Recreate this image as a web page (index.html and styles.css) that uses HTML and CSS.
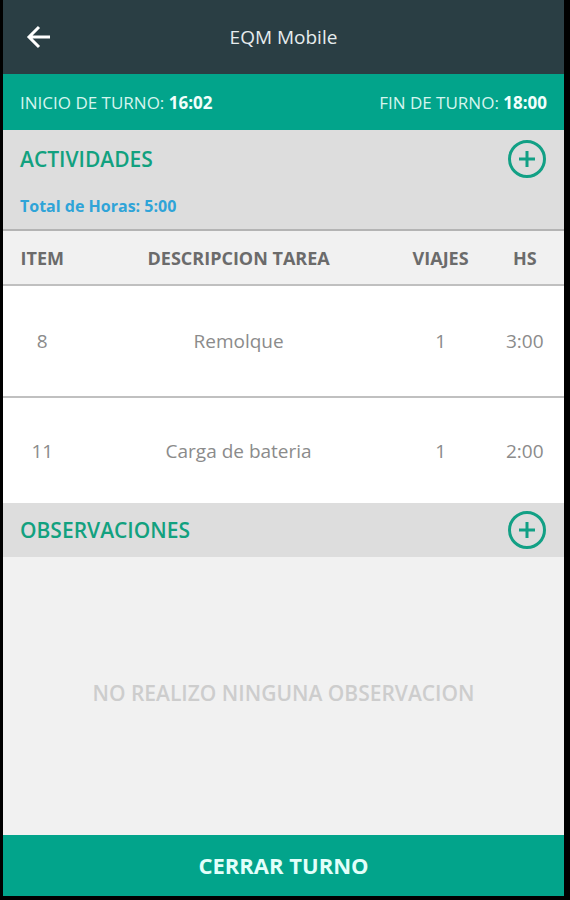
FILE: index.html
```html
<!DOCTYPE html>
<html lang="es">
<head>
<meta charset="utf-8">
<meta name="viewport" content="width=device-width, initial-scale=1">
<title>EQM Mobile</title>
<link rel="stylesheet" href="styles.css">
</head>
<body>
<div class="app">
  <header class="topbar">
    <button class="icon-button back" type="button" aria-label="Volver">
      <svg class="back-icon" viewBox="0 0 24 24" aria-hidden="true"><path d="M13 2 3 12l10 10M3 12H24"/></svg>
    </button>
    <h1 class="title">EQM Mobile</h1>
  </header>
  <div class="shift">
    <span>INICIO DE TURNO: <b>16:02</b></span>
    <span>FIN DE TURNO: <b>18:00</b></span>
  </div>
  <main class="content">
    <section class="activities">
      <div class="section-head">
        <h2 class="section-title">ACTIVIDADES</h2>
        <button class="icon-button" type="button" aria-label="Agregar actividad">
          <svg class="add-icon" viewBox="0 0 38 38" aria-hidden="true"><circle cx="19" cy="19" r="17.500"/><path d="M19 11v16M11 19h16"/></svg>
        </button>
      </div>
      <p class="total">Total de Horas: 5:00</p>
      <table class="tasks">
        <thead>
          <tr><th class="col-item">ITEM</th><th class="col-task">DESCRIPCION TAREA</th><th class="col-trips">VIAJES</th><th class="col-hours">HS</th></tr>
        </thead>
        <tbody>
          <tr><td>8</td><td>Remolque</td><td>1</td><td>3:00</td></tr>
          <tr><td>11</td><td>Carga de bateria</td><td>1</td><td>2:00</td></tr>
        </tbody>
      </table>
    </section>
    <section class="notes">
      <div class="section-head">
        <h2 class="section-title">OBSERVACIONES</h2>
        <button class="icon-button" type="button" aria-label="Agregar observación">
          <svg class="add-icon" viewBox="0 0 38 38" aria-hidden="true"><circle cx="19" cy="19" r="17.500"/><path d="M19 11v16M11 19h16"/></svg>
        </button>
      </div>
      <p class="empty">NO REALIZO NINGUNA OBSERVACION</p>
    </section>
  </main>
  <button class="close-shift" type="button">CERRAR TURNO</button>
</div>
</body>
</html>
```
FILE: styles.css
```css
* {
  box-sizing: border-box;
}

body {
  margin: 0;
  background: #000;
  font-family: "Open Sans", "Noto Sans", sans-serif;
}

h1, h2, p {
  margin: 0;
}

button {
  border: 0;
  padding: 0;
  font-family: inherit;
  cursor: pointer;
}

.app {
  display: flex;
  flex-direction: column;
  min-height: 100vh;
  border: solid #000;
  border-width: 0 6px 4px 3px;
  background: #f1f1f1;
}

.topbar {
  display: grid;
  grid-template-columns: 36px 1fr 36px;
  align-items: center;
  padding: 22px 17px;
  background: #2a3e44;
  color: #e6ecee;
}

.title {
  font-size: 19px;
  font-weight: 400;
  line-height: 30px;
  text-align: center;
}

.icon-button {
  display: flex;
  background: none;
}

.back {
  justify-content: center;
}

.back-icon {
  width: 24px;
  height: 24px;
  fill: none;
  stroke: #fff;
  stroke-width: 3;
}

.shift {
  display: flex;
  justify-content: space-between;
  padding: 17px 17px 15px;
  background: #02a48b;
  color: #d5f5ee;
  font-size: 17px;
  line-height: 24px;
}

.shift b {
  color: #f2fffc;
  font-weight: 700;
}

.content {
  display: flex;
  flex: 1;
  flex-direction: column;
}

.section-head {
  display: flex;
  align-items: center;
  justify-content: space-between;
  padding: 8px 18px 8px 17px;
  background: #ddd;
}

.activities .section-head {
  padding-top: 10px;
}

.section-title {
  color: #12a17f;
  font-size: 21px;
  font-weight: 600;
  line-height: 38px;
}

.add-icon {
  width: 38px;
  height: 38px;
  fill: none;
  stroke: #12a085;
  stroke-width: 3;
}

.total {
  padding: 8px 17px 11px;
  border-bottom: 2px solid #b4b4b4;
  background: #ddd;
  color: #2fa4d8;
  font-size: 16px;
  font-weight: 700;
  line-height: 24px;
}

.tasks {
  width: 100%;
  border-collapse: collapse;
  table-layout: fixed;
  background: #fff;
  text-align: center;
}

.tasks th {
  height: 54px;
  padding: 0;
  border-bottom: 2px solid #c0c0c0;
  background: #f1f1f1;
  color: #6b6b6b;
  font-size: 18px;
  font-weight: 700;
}

.tasks td {
  height: 112px;
  padding: 0;
  color: #8b8b8b;
  font-size: 19px;
}

.tasks tbody tr + tr td {
  border-top: 2px solid #c0c0c0;
  height: 106px;
}

.col-item, .col-hours {
  width: 14%;
}

.col-task {
  width: 56%;
}

.col-trips {
  width: 16%;
}

.notes {
  display: flex;
  flex: 1;
  flex-direction: column;
}

.empty {
  display: flex;
  flex: 1;
  align-items: center;
  justify-content: center;
  padding-bottom: 6px;
  color: #cdcdcd;
  font-size: 21px;
  font-weight: 600;
}

.close-shift {
  padding: 16px;
  background: #02a48b;
  color: #e2fffa;
  font-size: 22px;
  font-weight: 700;
  line-height: 29px;
}
```
